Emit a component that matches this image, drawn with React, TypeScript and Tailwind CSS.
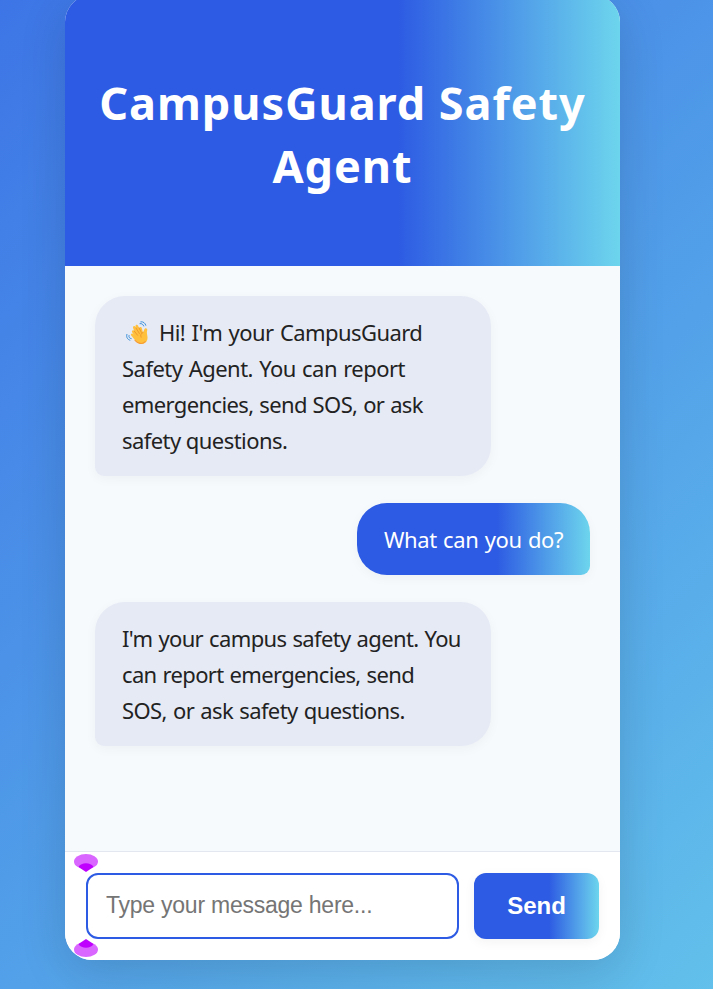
import type { ReactNode } from "react";

function Line({ children, className = "" }: { children: ReactNode; className?: string }) {
  return <span className={"block whitespace-nowrap " + className}>{children}</span>;
}

function WavingHand() {
  return (
    <svg width="24" height="24" viewBox="0 0 24 24" fill="none" className="mr-[9px] ml-[4px] inline-block align-[-4px]" aria-hidden="true">
      <path d="M6.1 11.2c-.8-1.8 1.2-2.8 2.1-1.2L7.1 7c-.7-1.8 1.5-2.7 2.4-1l.7 1.2-.6-1.7c-.5-1.7 1.8-2.3 2.5-.7l1 2.2c.4-1.5 2.5-1.4 2.7.3l1.2 4.3 1.3-3.1c.8-2 3.4-1.2 2.9.7-.6 2-.2 3.6.2 6 .7 4.2-1.4 7-4.9 7.7-3.2.6-5.6-1.3-7.4-3.6l-3.9-4.7c-1-1.5.5-2.6 1.8-1.7l.7.6z" fill="#FFC13D" />
      <path d="M8.2 10l3.4 4.3M10 7l3.4 5.5M13.1 7l2.2 4.3M17 11.5c-2.1.8-2.8 2.5-1.9 4.7" stroke="#E88B2B" strokeWidth=".8" strokeLinecap="round" />
      <path d="M9 19.3c3 3.4 7.2 4.4 10.3 1.4" stroke="#F59A36" strokeWidth="1.1" strokeLinecap="round" />
      <path d="M14 2.6c2-.3 3.1.8 3.7 2.4M14.8.8c2.7-.3 4.3 1.2 5 3.5M3 14.5c-.5 1.7.4 2.8 2.2 3.1M.9 13.4c-.9 2.8.5 5 3 5.8" stroke="#3D91D9" strokeWidth="1" strokeLinecap="round" />
    </svg>
  );
}

function BotBubble({ children }: { children: ReactNode }) {
  return (
    <div className="w-[396px] self-start rounded-[30px] rounded-bl-[9px] bg-[#e6eaf5] px-[27px] py-[18px] text-[#222] shadow-[0_3px_12px_rgba(0,0,0,0.04)]">
      {children}
    </div>
  );
}

function SelectionHandle({ flipped = false }: { flipped?: boolean }) {
  return (
    <svg width="24" height="18" viewBox="0 0 24 18" className={flipped ? "rotate-180" : ""} aria-hidden="true">
      <ellipse cx="12" cy="7.5" rx="12" ry="7.5" fill="#d966ff" />
      <path d="M4.5 13C7 8 17 8 19.5 13L12 18z" fill="#bf00ff" />
    </svg>
  );
}

export default function App() {
  return (
    <div className="h-[989px] w-[713px] overflow-hidden bg-[linear-gradient(135deg,#3d75e6_0%,#62c0eb_100%)] font-['Noto_Sans','Open_Sans',sans-serif]">
      <main className="-mt-[5px] ml-[65px] flex h-[965px] w-[555px] flex-col overflow-hidden rounded-[27px] bg-white shadow-[0_12px_48px_rgba(0,0,0,0.14)]">
        <header className="flex h-[271px] shrink-0 items-center justify-center bg-[linear-gradient(90deg,#2d5be3_60%,#6dd5ed_100%)] pt-[6px] text-center text-white">
          <h1 className="text-[45px] leading-[63px] font-bold tracking-[0.95px]">
            <Line>CampusGuard Safety</Line>
            <Line>Agent</Line>
          </h1>
        </header>
        <section className="flex flex-1 flex-col gap-[27px] bg-[#f7fafd] p-[30px] text-[22px] leading-9">
          <BotBubble>
            <Line className="tracking-[-0.58px] [word-spacing:1.3px]"><WavingHand />Hi! I'm your CampusGuard</Line>
            <Line className="tracking-[-0.52px] [word-spacing:1px]">Safety Agent. You can report</Line>
            <Line className="tracking-[-0.62px] [word-spacing:0.7px]">emergencies, send SOS, or ask</Line>
            <Line className="tracking-[-0.56px]">safety questions.</Line>
          </BotBubble>
          <div className="w-[233px] self-end rounded-[30px] rounded-br-[9px] bg-[linear-gradient(90deg,#2d5be3_60%,#6dd5ed_100%)] px-[27px] py-[18px] text-white shadow-[0_3px_12px_rgba(0,0,0,0.04)]">
            <Line className="tracking-[-0.4px] [word-spacing:1px]">What can you do?</Line>
          </div>
          <BotBubble>
            <Line className="tracking-[-0.65px] [word-spacing:1px]">I'm your campus safety agent. You</Line>
            <Line className="tracking-[-0.66px] [word-spacing:1px]">can report emergencies, send</Line>
            <Line className="tracking-[-0.6px] [word-spacing:1px]">SOS, or ask safety questions.</Line>
          </BotBubble>
        </section>
        <footer className="relative flex h-[109px] shrink-0 gap-[15px] border-t border-[#e3e8f0] bg-white px-[21px] py-[21px] font-['Liberation_Sans',Arial,sans-serif]">
          <input
            className="h-[66px] w-[373px] rounded-xl border-2 border-[#2d5be3] bg-white px-[18px] pb-[2px] text-[23px] tracking-[-0.24px] outline-none placeholder:text-[#757575]"
            placeholder="Type your message here..."
          />
          <button className="h-[66px] w-[125px] rounded-xl bg-[linear-gradient(90deg,#2d5be3_60%,#6dd5ed_100%)] text-[24px] font-bold text-white shadow-[0_3px_12px_rgba(0,0,0,0.05)]">
            Send
          </button>
          <div className="absolute top-[2px] left-[9px]"><SelectionHandle /></div>
          <div className="absolute top-[87px] left-[9px]"><SelectionHandle flipped /></div>
        </footer>
      </main>
    </div>
  );
}
